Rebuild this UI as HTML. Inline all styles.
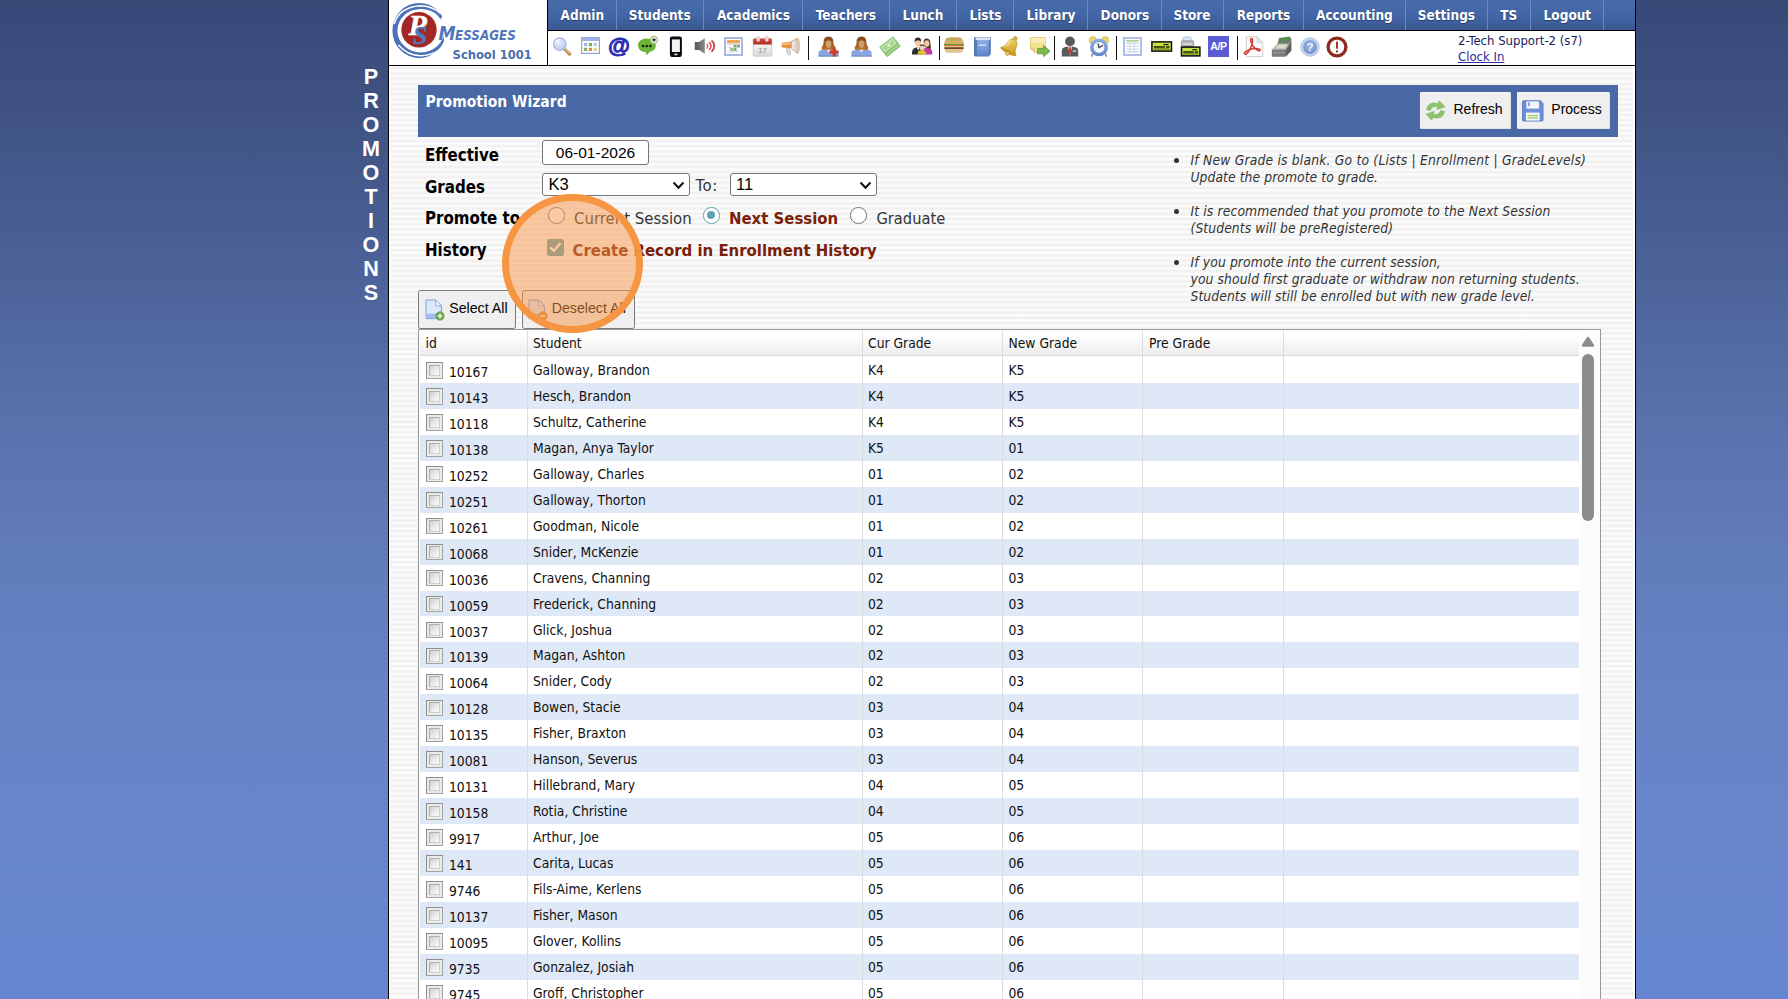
<!DOCTYPE html>
<html lang="en"><head><meta charset="utf-8"><title>Promotion Wizard</title>
<style>
html,body{margin:0;padding:0}
body{width:1788px;height:999px;overflow:hidden;position:relative;
 background:linear-gradient(to bottom,#374977 0px,#3e5181 100px,#4a6096 250px,#5770aa 400px,#617cba 550px,#6683c5 700px,#6786cb 850px,#6585d0 999px);
 font-family:"DejaVu Sans Condensed","DejaVu Sans","Liberation Sans",sans-serif;font-size:13.75px;color:#111}
.abs{position:absolute}
#main{position:absolute;left:388px;top:0;width:1246px;height:999px;border-left:1px solid #000;border-right:1px solid #000;
 background:#fff}
#stripes{position:absolute;left:390px;top:63.1px;width:1243px;height:940px;
 background:repeating-linear-gradient(to bottom,#f0f0f0 0px,#f3f3f3 .9px,#fdfdfd 2.4px,#fdfdfd 2.8px,#f3f3f3 4.3px,#f0f0f0 5.2px)}
#hdrwhite{position:absolute;left:389px;top:0;width:1246px;height:65px;background:#fff}
#hline{position:absolute;left:389px;top:65px;width:1246px;height:1px;background:#000}
#vline{position:absolute;left:547px;top:0;width:1px;height:65px;background:#000}
#nav{position:absolute;left:548px;top:0;width:1087px;height:30px;background:linear-gradient(to bottom,#4a6ba8 0,#4367a8 45%,#3f5f9d 75%,#3a5791 100%)}
#navline{position:absolute;left:548px;top:30px;width:1087px;height:1px;background:#000}
.ni{position:absolute;top:0;height:30px;border-right:1px solid #6c89c2;box-sizing:border-box;color:#fff;font-weight:bold;font-size:13.85px;line-height:30.4px;text-align:center;text-shadow:0 1px 1px rgba(20,30,60,.55);white-space:nowrap}
.ni span{display:inline-block;transform:scaleX(.975);transform-origin:50% 50%}
.side{position:absolute;left:351px;width:40px;text-align:center;color:#fff;font:bold 21.6px/24px "Liberation Sans",sans-serif}
.sep{position:absolute;top:36px;width:1.4px;height:24px;background:#111}
.ico{position:absolute;overflow:visible}
#user{position:absolute;left:1458px;top:33px;font-size:13px;line-height:16px;color:#1c1c5c;white-space:nowrap}
#user a{color:#2a2a9c;text-decoration:underline}
#title{position:absolute;left:418px;top:85px;width:1200px;height:52px;background:#4869a6}
#title h1{position:absolute;left:7.5px;top:6.5px;margin:0;color:#fff;font-size:15.5px;line-height:20px;font-weight:bold;white-space:nowrap}
.btn{position:absolute;box-sizing:border-box;background:#efefef;border:1px solid #5d6f96;border-radius:2.5px;font:14px/20px "Liberation Sans",sans-serif;color:#000;white-space:nowrap}
.btn span{position:absolute}
.lbl{position:absolute;left:425px;font-weight:bold;font-size:16.75px;line-height:20px;color:#000;white-space:nowrap}
.t16{position:absolute;font-size:16.6px;line-height:20px;color:#333;white-space:nowrap}
.red{color:#7a2008;font-weight:bold}
.inp{position:absolute;box-sizing:border-box;background:#fff;border:1px solid #767676;border-radius:3px;font:16px/22px "Liberation Sans",sans-serif;color:#000}
.radio{position:absolute;box-sizing:border-box;width:16.5px;height:16.5px;border-radius:50%;border:1.5px solid #767676;background:#fff}
#notes{position:absolute;left:1190.5px;top:151.7px;font-style:italic;font-size:13.75px;line-height:17px;color:#333;white-space:nowrap}
#notes div{position:absolute;left:0;white-space:nowrap}
#notes i{position:absolute;left:-16.8px;width:5.4px;height:5.4px;border-radius:50%;background:#333}
#grid{position:absolute;left:418px;top:329px;width:1183px;height:680px;box-sizing:border-box;border:1px solid #999;background:#fff}
#ghead{position:absolute;left:420px;top:330px;width:1159px;height:25px;background:linear-gradient(to bottom,#ffffff 0,#fbfbfb 40%,#ececec 100%);border-bottom:1px solid #d8d8d8}
.gh{position:absolute;top:330.7px;height:25px;line-height:25px;font-size:13.75px;color:#111;white-space:nowrap}
.vl{position:absolute;top:331px;width:1px;height:668px;background:#dcdcdc}
.row{position:absolute;left:420px;width:1159px;height:26px}
.row.alt{background:#dfe8f6}
.c{position:absolute;white-space:nowrap;font-size:13.75px;line-height:26px;height:26px;top:0}
.cb{position:absolute;left:6px;top:5.2px;width:16.8px;height:16.5px;box-sizing:border-box;border:1.4px solid;border-color:#8d8d8d #a3a3a3 #a3a3a3 #8d8d8d;background:#ebebeb}
.cb b{position:absolute;left:1.6px;top:1.6px;right:1.6px;bottom:1.6px;box-sizing:border-box;border:1px solid;border-color:#adadad #cfcfcf #cfcfcf #adadad;background:linear-gradient(135deg,#cdcdcd 0,#e6e6e6 45%,#fbfbfb 100%)}
#hl{position:absolute;left:502.4px;top:194px;width:140.2px;height:139px;box-sizing:border-box;border-radius:50%;border:7px solid rgba(247,148,62,.96);background:rgba(247,150,70,.5)}
</style></head>
<body>
<div id="main"></div><div id="stripes"></div><div id="hdrwhite"></div>
<div class="side" style="top:64.6px">P</div><div class="side" style="top:88.6px">R</div><div class="side" style="top:112.6px">O</div><div class="side" style="top:136.6px">M</div><div class="side" style="top:160.6px">O</div><div class="side" style="top:184.6px">T</div><div class="side" style="top:208.6px">I</div><div class="side" style="top:232.6px">O</div><div class="side" style="top:256.6px">N</div><div class="side" style="top:280.6px">S</div>
<svg class="ico" style="left:389px;top:0" width="158" height="65" viewBox="0 0 158 65"><path fill-rule="evenodd" fill="#4b72b7" d="M3.4 30.6 A26.8 27.6 0 1 0 57 30.6 A26.8 27.6 0 1 0 3.4 30.6 Z M8.4 30.7 A23.4 21.8 0 1 0 55.2 30.7 A23.4 21.8 0 1 0 8.4 30.7 Z"/><path d="M52 18 L60 12 L62 50 L55.5 44.5 Z" fill="#fff"/><path d="M5.2 24 Q10 7.4 31 5.8 Q43 5.8 51.5 13.5" fill="none" stroke="#fff" stroke-width="1.5"/><path d="M9.5 45 Q20 57.4 36 55.4 Q47 53.8 55.5 46" fill="none" stroke="#fff" stroke-width="1.4"/><circle cx="30" cy="29.8" r="17.7" fill="#a32724"/><text x="19.6" y="35.4" font-family="Liberation Serif,serif" font-size="30" font-style="italic" font-weight="bold" fill="#fff" stroke="#fff" stroke-width=".5">P</text><text x="24" y="43.8" font-family="Liberation Serif,serif" font-size="26" font-style="italic" font-weight="bold" fill="#4f78c0" stroke="#4f78c0" stroke-width=".4">S</text><text x="49.6" y="39.8" font-family="DejaVu Sans Condensed,DejaVu Sans,sans-serif" font-style="italic" font-weight="bold" fill="#5075ba"><tspan font-size="19">M</tspan><tspan font-size="13.3" dx="-.6">ESSAGES</tspan></text><text x="63.6" y="58.6" font-family="DejaVu Sans Condensed,DejaVu Sans,sans-serif" font-size="12.8" font-weight="bold" fill="#4a6fae">School 1001</text></svg>
<div id="nav"></div><div id="navline"></div><div id="vline"></div><div id="hline"></div>
<div class="ni" style="left:548px;width:69px"><span>Admin</span></div><div class="ni" style="left:617px;width:87px"><span>Students</span></div><div class="ni" style="left:704px;width:99px"><span>Academics</span></div><div class="ni" style="left:803px;width:87px"><span>Teachers</span></div><div class="ni" style="left:890px;width:67px"><span>Lunch</span></div><div class="ni" style="left:957px;width:57px"><span>Lists</span></div><div class="ni" style="left:1014px;width:74px"><span>Library</span></div><div class="ni" style="left:1088px;width:74px"><span>Donors</span></div><div class="ni" style="left:1162px;width:62px"><span>Store</span></div><div class="ni" style="left:1224px;width:80px"><span>Reports</span></div><div class="ni" style="left:1304px;width:102px"><span>Accounting</span></div><div class="ni" style="left:1406px;width:82px"><span>Settings</span></div><div class="ni" style="left:1488px;width:43px"><span>TS</span></div><div class="ni" style="left:1531px;width:73px"><span>Logout</span></div>
<svg width="0" height="0" style="position:absolute"><defs>
<linearGradient id="gBlue" x1="0" y1="0" x2="0" y2="1"><stop offset="0" stop-color="#8fb0e6"/><stop offset="1" stop-color="#5f86cc"/></linearGradient>
<linearGradient id="gGray" x1="0" y1="0" x2="1" y2="0"><stop offset="0" stop-color="#555"/><stop offset="1" stop-color="#8a8a8a"/></linearGradient>
<linearGradient id="gGold" x1="0" y1="0" x2="1" y2="1"><stop offset="0" stop-color="#f2dc7a"/><stop offset="1" stop-color="#c79a1e"/></linearGradient>
<linearGradient id="gRed" x1="0" y1="0" x2="0" y2="1"><stop offset="0" stop-color="#d9473a"/><stop offset="1" stop-color="#b02a20"/></linearGradient>
<linearGradient id="gPage" x1="0" y1="0" x2="0" y2="1"><stop offset="0" stop-color="#ffffff"/><stop offset="1" stop-color="#d8d8d8"/></linearGradient>
<radialGradient id="gLens" cx=".4" cy=".35" r=".7"><stop offset="0" stop-color="#e6eefc"/><stop offset="1" stop-color="#b7c9ee"/></radialGradient>
<radialGradient id="gHelp" cx=".5" cy=".35" r=".7"><stop offset="0" stop-color="#9db7e4"/><stop offset="1" stop-color="#6f90cc"/></radialGradient>
<linearGradient id="gHair" x1="0" y1="0" x2="0" y2="1"><stop offset="0" stop-color="#8a4a1c"/><stop offset="1" stop-color="#b9722f"/></linearGradient>
<linearGradient id="gCone" x1="0" y1="0" x2="1" y2="0"><stop offset="0" stop-color="#f4f4f4"/><stop offset="1" stop-color="#b9b9b9"/></linearGradient>
</defs></svg>
<svg class="ico" style="left:551px;top:35px" width="22" height="22" viewBox="0 0 22 22"><path d="M13.2 13.6 L18.6 19" stroke="#b58f52" stroke-width="3.4" stroke-linecap="round"/><path d="M13.6 13.2 L18.2 17.8" stroke="#e0c792" stroke-width="1.2" stroke-linecap="round"/><circle cx="8.8" cy="9.1" r="6.3" fill="url(#gLens)" stroke="#a9b9dc" stroke-width="1.3"/><path d="M4.8 8 A4.4 4.4 0 0 1 9 4.6" stroke="#fff" stroke-width="1.2" fill="none" opacity=".8"/></svg>
<svg class="ico" style="left:581px;top:37px" width="19" height="17" viewBox="0 0 19 17"><rect x=".6" y=".6" width="17.8" height="15.8" fill="#fdfdff" stroke="#8fa5d6" stroke-width="1.2"/><rect x="1" y="1" width="17" height="3" fill="#9fb4e4"/><rect x="3" y="6" width="3.2" height="3.2" fill="#9fb7e6"/><rect x="7.8" y="6" width="3.2" height="3.2" fill="#7fae55"/><rect x="12.6" y="6" width="3.2" height="3.2" fill="#b9c6e6"/><rect x="3" y="10.8" width="3.2" height="3.2" fill="#86b35a"/><rect x="7.8" y="10.8" width="3.2" height="3.2" fill="#e58a4e"/><rect x="12.6" y="10.8" width="3.2" height="3.2" fill="#ecd26a"/></svg>
<div class="abs" style="left:606px;top:29.6px;width:26px;height:32px;font:bold 22.5px/32px 'Liberation Sans',sans-serif;color:#2b2bb3;-webkit-text-stroke:.9px #2b2bb3;text-align:center">@</div>
<svg class="ico" style="left:637px;top:35px" width="22" height="22" viewBox="0 0 22 22"><path d="M9.6 3.6 C4.4 3.6 1 6.6 1 10.4 C1 14 4.2 16.8 8.8 17.2 L9.6 20.6 L12.8 16.8 C16.6 16 18.8 13.4 18.8 10.4 C18.8 6.6 15 3.6 9.6 3.6 Z" fill="#6cb33a"/><circle cx="6" cy="11" r="1.25" fill="#0b1a05"/><circle cx="9.7" cy="11" r="1.25" fill="#0b1a05"/><circle cx="13.4" cy="11" r="1.25" fill="#0b1a05"/><circle cx="17" cy="4.9" r="3.6" fill="#f4f8ee" stroke="#7dba4e" stroke-width="1"/><path d="M17 3 V6.8 M15.1 4.9 H18.9" stroke="#222" stroke-width="1.1"/></svg>
<svg class="ico" style="left:669px;top:36px" width="14" height="22" viewBox="0 0 14 22"><rect x=".9" y=".4" width="12" height="20.6" rx="2.2" fill="#0c0c0c"/><rect x="2.9" y="3.4" width="8" height="12.6" fill="#f2f2f2"/><rect x="5.2" y="17.4" width="3.4" height="1.8" rx=".8" fill="#d8d8d8"/></svg>
<svg class="ico" style="left:694px;top:37px" width="23" height="18" viewBox="0 0 23 18"><path d="M.8 5 H5 L10.8 1.2 V16.8 L5 13 H.8 Z" fill="url(#gGray)"/><path d="M13 7.2 A2.6 2.6 0 0 1 13 11" fill="none" stroke="#d86a72" stroke-width="1.4" stroke-linecap="round"/><path d="M15.4 5.6 A4.6 4.6 0 0 1 15.4 12.6" fill="none" stroke="#d45560" stroke-width="1.6" stroke-linecap="round"/><path d="M18 4 A6.8 6.8 0 0 1 18 14.2" fill="none" stroke="#cc4450" stroke-width="1.8" stroke-linecap="round"/></svg>
<svg class="ico" style="left:724px;top:37px" width="19" height="19" viewBox="0 0 19 19"><rect x="1" y="1" width="17" height="17" fill="#fff" stroke="#a9b8e2" stroke-width="2"/><rect x="3" y="3" width="13" height="3.4" fill="#f0a45a"/><rect x="9.6" y="7.6" width="3" height="3" fill="#78b060"/><rect x="12.8" y="7.6" width="3" height="3" fill="#78b060"/><rect x="6.3" y="11" width="3" height="3" fill="#8fbf6c"/><rect x="9.6" y="11" width="3" height="3" fill="#78b060"/><path d="M3 7.3 H16 M3 10.7 H16 M3 14.2 H16 M6 6.5 V16 M9.3 6.5 V16 M12.6 6.5 V16" stroke="#c5cfe8" stroke-width=".7"/></svg>
<svg class="ico" style="left:752px;top:36px" width="21" height="21" viewBox="0 0 21 21"><rect x="1.2" y="3" width="18.6" height="17.2" rx="1" fill="url(#gPage)" stroke="#c6c6c6" stroke-width=".8"/><path d="M1.2 3.8 Q1.2 2.6 2.4 2.6 H18.6 Q19.8 2.6 19.8 3.8 V8.4 H1.2 Z" fill="url(#gRed)"/><rect x="4.6" y=".4" width="3.2" height="5" rx="1.2" fill="#f1dede" stroke="#c9a9a6" stroke-width=".5"/><rect x="13.2" y=".4" width="3.2" height="5" rx="1.2" fill="#f1dede" stroke="#c9a9a6" stroke-width=".5"/><text x="10.6" y="17.4" text-anchor="middle" font-family="Liberation Sans,sans-serif" font-size="7.6" font-weight="bold" fill="#a8a8a8">17</text></svg>
<svg class="ico" style="left:780px;top:37px" width="22" height="21" viewBox="0 0 22 21"><path d="M6.2 10.4 L9.4 10.6 L10.6 16.2 Q10.8 17.6 9.6 17.8 L8.6 18 Q7.6 18 7.4 16.8 Z" fill="#d9d9d9" stroke="#a9a9a9" stroke-width=".6"/><path d="M2 5.8 Q1 8 2 10.6 L11.8 11.2 V4.6 Z" fill="#e8923c"/><path d="M2.4 6.6 L11.6 5.6 V7.4 L2.2 8 Z" fill="#f6c58e"/><path d="M11.4 4.4 L17.6 1 Q21 7.8 17.8 16.6 L11.4 11.6 Z" fill="url(#gCone)" stroke="#c98e5a" stroke-width=".7"/><ellipse cx="18.4" cy="8.8" rx="1.6" ry="7.8" fill="#e9c9a5" opacity=".8"/></svg>
<svg class="ico" style="left:818px;top:36px" width="21" height="21" viewBox="0 0 21 21"><path d="M.4 20.6 V17 Q.4 14.4 4 14 L8 13.2 H13 L17 14 Q20.6 14.4 20.6 17 V20.6 Z" fill="#89a5de"/><rect x=".4" y="19.4" width="20.2" height="1.2" fill="#7693d0"/><path d="M8 13 L10.5 16.4 L13 13 Z" fill="#f3f3f8"/><path d="M10.5 .6 C6.6 .6 5.4 3.6 5.6 6.6 C5.8 9.4 3.4 10.4 3.6 12.4 C3.8 14 6 14.4 7.6 13.8 L13.4 13.8 C15 14.4 17.2 14 17.4 12.4 C17.6 10.4 15.2 9.4 15.4 6.6 C15.6 3.6 14.4 .6 10.5 .6 Z" fill="url(#gHair)"/><path d="M7.6 6.4 Q7.6 3.8 10.5 4.4 Q13.4 3.8 13.4 6.4 Q13.4 11 10.5 12.6 Q7.6 11 7.6 6.4 Z" fill="#cfa06c"/><path d="M7.2 5.6 Q9.4 5.4 10.6 3.2 Q11.8 5.2 13.8 5.6 Q13.6 2 10.5 2 Q7.4 2 7.2 5.6 Z" fill="#8a4a1c"/><path d="M16.2 11.6 V20.4 M11.8 16 H20.6" stroke="#d23c24" stroke-width="3.2"/></svg>
<svg class="ico" style="left:851px;top:36px" width="21" height="21" viewBox="0 0 21 21"><path d="M.4 20.6 V17 Q.4 14.4 4 14 L8 13.2 H13 L17 14 Q20.6 14.4 20.6 17 V20.6 Z" fill="#89a5de"/><rect x=".4" y="19.4" width="20.2" height="1.2" fill="#7693d0"/><path d="M8 13 L10.5 16.4 L13 13 Z" fill="#f3f3f8"/><path d="M10.5 .6 C6.6 .6 5.4 3.6 5.6 6.6 C5.8 9.4 3.4 10.4 3.6 12.4 C3.8 14 6 14.4 7.6 13.8 L13.4 13.8 C15 14.4 17.2 14 17.4 12.4 C17.6 10.4 15.2 9.4 15.4 6.6 C15.6 3.6 14.4 .6 10.5 .6 Z" fill="url(#gHair)"/><path d="M7.6 6.4 Q7.6 3.8 10.5 4.4 Q13.4 3.8 13.4 6.4 Q13.4 11 10.5 12.6 Q7.6 11 7.6 6.4 Z" fill="#cfa06c"/><path d="M7.2 5.6 Q9.4 5.4 10.6 3.2 Q11.8 5.2 13.8 5.6 Q13.6 2 10.5 2 Q7.4 2 7.2 5.6 Z" fill="#8a4a1c"/></svg>
<svg class="ico" style="left:879px;top:35px" width="22" height="23" viewBox="0 0 22 23"><g transform="translate(11 11.7) scale(.86) rotate(-38) translate(-11.1 -11.7)"><rect x="1.4" y="9" width="19.4" height="9.6" fill="#9fcf86" stroke="#79b361" stroke-width=".9"/><rect x="1.4" y="4.8" width="19.4" height="9.6" fill="#a9d890" stroke="#79b361" stroke-width=".9"/><rect x="3.2" y="6.4" width="15.8" height="6.4" fill="none" stroke="#d2ebc4" stroke-width=".9"/><circle cx="11.1" cy="9.6" r="2.5" fill="#d9efcd" stroke="#8cc274" stroke-width=".6"/></g></svg>
<svg class="ico" style="left:911px;top:36px" width="22" height="20" viewBox="0 0 22 20"><path d="M1 18.6 Q.6 12.6 5 11.6 L9.4 11.4 Q12 12.4 11.6 18.6 Z" fill="#2c2c30"/><path d="M5.6 11.4 L7.2 14.6 L8.8 11.4 Z" fill="#e8eef8"/><path d="M11.6 18.6 Q11.2 12.8 14.6 11.8 L18 11.8 Q21.6 12.8 21.2 18.6 Z" fill="#c038a8"/><path d="M12.6 6.6 Q12.4 2.6 15.8 2.6 Q19.6 2.8 19.4 7.6 Q19.6 10.6 20 12.4 L17.6 12.4 L13.8 11 Q12.8 9 12.6 6.6 Z" fill="#4a3428"/><ellipse cx="15.8" cy="7.6" rx="2.6" ry="3.3" fill="#f0c9a2"/><ellipse cx="6.8" cy="6.6" rx="3" ry="3.7" fill="#f0c9a2"/><path d="M3.6 6.4 Q3.2 1.6 7 1.6 Q10.6 1.8 10 6 Q8.4 3.6 6 4.4 Q4.4 4.6 3.6 6.4 Z" fill="#3a2a22"/><path d="M6.6 18.6 Q6.4 14.8 9 14.2 L12.8 14.2 Q15.2 14.8 15 18.6 Z" fill="#d8c42a"/><ellipse cx="10.9" cy="11.4" rx="2.3" ry="2.6" fill="#f2cfa8"/><path d="M8.6 10.8 Q8.6 8.2 10.9 8.2 Q13.2 8.2 13.2 10.8 Q11.8 9.4 10.9 9.8 Q9.8 9.6 8.6 10.8 Z" fill="#5a3a24"/></svg>
<svg class="ico" style="left:943px;top:36px" width="22" height="18" viewBox="0 0 22 18"><path d="M1.4 8 Q1.2 1.4 6.4 1.2 H15.4 Q20.6 1.4 20.6 8 Z" fill="#d9b26a"/><path d="M3 3.4 Q5 1.8 11 1.8 Q17 1.8 19 3.4 Q17 5 11 5.2 Q5 5 3 3.4 Z" fill="#b8a458" opacity=".7"/><rect x="1" y="7.8" width="20" height="1.6" fill="#6f9a3a"/><rect x="1.2" y="9.2" width="19.6" height="1.3" fill="#d8503a"/><rect x="1" y="10.3" width="20" height="1.1" fill="#f0d25a"/><rect x="1.4" y="11.2" width="19.2" height="2" fill="#6a4a2a"/><path d="M1.6 13 H20.4 Q20.4 16.6 17 16.8 H5 Q1.6 16.6 1.6 13 Z" fill="#e2c58c"/></svg>
<svg class="ico" style="left:972.5px;top:36px" width="19" height="21.5" viewBox="0 0 19 21.5"><path d="M2.4 1 H16.8 Q17.8 1 17.8 2 V18 L15.8 20.4 H2.4 Q1 20.4 1 19 V2.4 Q1 1 2.4 1 Z" fill="#5577b8"/><path d="M2.6 1.4 H17 V4 H2.6 Z" fill="#dfe7f6"/><rect x="2.2" y="4" width="13.6" height="15.6" fill="url(#gBlue)"/><rect x="2.2" y="4" width="1.6" height="15.6" fill="#4f72b4"/><rect x="5.8" y="8.4" width="7" height="1.5" fill="#dbe5f7"/></svg>
<svg class="ico" style="left:1000px;top:35px" width="22" height="23" viewBox="0 0 22 23"><g transform="rotate(28 11 11.5)"><circle cx="11" cy="2.4" r="1.9" fill="#d9b43a" stroke="#b18f24" stroke-width=".6"/><path d="M11 3.6 C6.4 3.6 6.2 9 5.6 12.6 C5.2 15 3 15.8 2.4 17.4 H19.6 C19 15.8 16.8 15 16.4 12.6 C15.8 9 15.6 3.6 11 3.6 Z" fill="url(#gGold)" stroke="#b89322" stroke-width=".7"/><ellipse cx="11" cy="17.6" rx="8.6" ry="1.7" fill="#c79a1e"/><circle cx="11" cy="19.4" r="1.9" fill="#e9cf62" stroke="#a8841c" stroke-width=".6"/><path d="M8 6.6 Q7.2 9.6 7 12.6" stroke="#fbf0b8" stroke-width="1.3" fill="none" opacity=".8"/></g></svg>
<svg class="ico" style="left:1030px;top:37px" width="21" height="20" viewBox="0 0 21 20"><path d="M.6 .6 H15.4 V15.4 H4.4 L.6 11.6 Z" fill="#f3e38c" stroke="#d8c56a" stroke-width=".8"/><rect x="1" y="1" width="14" height="4.6" fill="#f8efc0"/><path d="M.8 11.4 H4.6 V15.2 Z" fill="#e8d9a0" stroke="#cdb860" stroke-width=".5"/><path d="M7.6 11.4 H13.6 V8.6 L20 14.2 L13.6 19.6 V16.8 H7.6 Z" fill="#7fb84e" stroke="#5f9a32" stroke-width=".9" stroke-linejoin="round"/></svg>
<svg class="ico" style="left:1061px;top:36px" width="18" height="21" viewBox="0 0 18 21"><circle cx="9" cy="5.4" r="4.9" fill="#595959"/><path d="M.8 20.6 V15 Q.8 11.6 4.6 11 L7 10.4 H11 L13.4 11 Q17.2 11.6 17.2 15 V20.6 Z" fill="#5a5a5a"/><path d="M7 10.6 L9 19.6 L11 10.6 Z" fill="#f4f4f4"/><path d="M8.2 11 H9.8 L10.3 16.4 L9 18.6 L7.7 16.4 Z" fill="#d63a2c"/><rect x="11.8" y="14.4" width="3.4" height="1.5" fill="#cfcfcf"/></svg>
<svg class="ico" style="left:1088px;top:35.5px" width="22" height="22" viewBox="0 0 22 22"><path d="M4.6 18 L3.6 20 M17.4 18 L18.4 20" stroke="#9a9a9a" stroke-width="1.8" stroke-linecap="round"/><circle cx="4.8" cy="4.2" r="3.6" fill="#ecd46a" stroke="#cfae3c" stroke-width=".6"/><circle cx="17.2" cy="4.2" r="3.6" fill="#ecd46a" stroke="#cfae3c" stroke-width=".6"/><circle cx="11" cy="11.4" r="8.9" fill="url(#gBlue)"/><circle cx="11" cy="11.4" r="5.9" fill="#f7f9fd" stroke="#5d80c2" stroke-width=".7"/><path d="M11 11.6 L10.2 8 M11 11.6 L14.4 9.6" stroke="#555" stroke-width="1.5" stroke-linecap="round"/></svg>
<svg class="ico" style="left:1123px;top:37px" width="19" height="19" viewBox="0 0 19 19"><rect x="1" y="1" width="17" height="17" fill="#fff" stroke="#b0bde6" stroke-width="2"/><rect x="3.2" y="3.2" width="12.6" height="1.4" fill="#9fc77a"/><rect x="3.2" y="5.6" width="12.6" height="1.3" fill="#ccd5ee"/><path d="M3.2 9.2 H15.8 M3.2 12 H15.8 M3.2 14.8 H15.8" stroke="#c8d2ec" stroke-width="1"/><path d="M6.6 6.6 V16 M11 6.6 V16" stroke="#c8d2ec" stroke-width=".9"/></svg>
<svg class="ico" style="left:1150.6px;top:41px" width="21.4" height="11" viewBox="0 0 21.4 11"><rect x="0.9" y="0.9" width="19.599999999999998" height="9.2" fill="#c5e33c" stroke="#0d0d0d" stroke-width="1.5"/><rect x="12.411999999999999" y="2.97" width="5.135999999999999" height="1.2" fill="#1a1a1a"/><rect x="2.782" y="5.17" width="11.128" height="1.6" fill="#23300a"/><rect x="14.979999999999999" y="5.17" width="3.638" height="1.6" fill="#23300a"/><rect x="2.782" y="7.48" width="15.835999999999999" height="1" fill="#4a5a14"/></svg>
<svg class="ico" style="left:1179.5px;top:36px" width="21" height="21" viewBox="0 0 21 21"><path d="M4 1 H10.4 L12 3.6 V6 H3 V2 Z" fill="#dfe8f8" stroke="#9fb0d0" stroke-width=".7"/><path d="M1.4 6 Q1.4 4.8 2.6 4.8 H12.4 Q13.6 4.8 13.6 6 V12 H1.4 Z" fill="#b8b8b8" stroke="#8e8e8e" stroke-width=".7"/><rect x="3" y="7.6" width="9" height="1.2" fill="#ececec"/><rect x="3" y="9.6" width="9" height="1" fill="#8a8a8a"/><rect x="1.5" y="11.1" width="18.4" height="8.799999999999999" fill="#c5e33c" stroke="#0d0d0d" stroke-width="1.5"/><rect x="12.315999999999999" y="13.062" width="4.848" height="1.2" fill="#1a1a1a"/><rect x="3.226" y="15.181999999999999" width="10.504" height="1.6" fill="#23300a"/><rect x="14.739999999999998" y="15.181999999999999" width="3.434" height="1.6" fill="#23300a"/><rect x="3.226" y="17.408" width="14.947999999999999" height="1" fill="#4a5a14"/></svg>
<div class="abs" style="left:1208px;top:36px;width:21px;height:21px;background:#5a5ad2;color:#fff;font:bold 10.6px/21px 'Liberation Sans',sans-serif;text-align:center;letter-spacing:-.4px">A/P</div>
<svg class="ico" style="left:1243px;top:35.5px" width="21" height="22" viewBox="0 0 21 22"><path d="M3.4 .8 H14 L19.8 6.6 V20.6 H3.4 Z" fill="#fbfbfb" stroke="#c9c9c9" stroke-width=".9"/><path d="M14 .8 V6.6 H19.8 Z" fill="#e6e6e6" stroke="#c9c9c9" stroke-width=".7"/><path d="M8.4 2.6 C10.4 2.4 9.6 7.6 7.4 12.4 C5.8 16 3 19 1.6 18 C0 16.6 5.6 13 11.4 12.6 C15.4 12.2 17.8 13.2 17.2 14.4 C16.4 15.8 12.4 13.6 10 10 C7.6 6.4 7 2.8 8.4 2.6 Z" fill="none" stroke="#d63a32" stroke-width="1.5" stroke-linejoin="round"/></svg>
<svg class="ico" style="left:1270.5px;top:35.5px" width="22" height="22" viewBox="0 0 22 22"><path d="M8 2 L19 .6 L20.4 3.4 L18 8.6 L6.4 8.6 Z" fill="#6d7a6a"/><path d="M9.6 3 L18.4 1.8 L19 3.6 L10.2 5 Z" fill="#4f9a3a"/><path d="M.8 13.6 L6.8 7.4 H18.6 L15 13.6 Z" fill="#a9ad9f"/><path d="M3.6 12.4 L7.6 8.6 H16.6 L14.2 12.4 Z" fill="#d9dcc9"/><path d="M.8 13.6 H15 V20 Q15 20.8 14.2 20.8 H1.6 Q.8 20.8 .8 20 Z" fill="#7b7b7b"/><path d="M15 13.6 L18.6 7.4 L20.4 3.6 V14.8 L15 20.6 Z" fill="#5e5e5e"/><rect x="2.4" y="16" width="11" height="1.2" fill="#9a9a9a"/></svg>
<svg class="ico" style="left:1300.2px;top:36.9px" width="20" height="20" viewBox="0 0 20 20"><circle cx="10" cy="10" r="9.2" fill="#c8d6ef" stroke="#a8bbe0" stroke-width=".9"/><circle cx="10" cy="10" r="6.9" fill="url(#gHelp)"/><text x="10" y="14.2" text-anchor="middle" font-family="Liberation Sans,sans-serif" font-size="11.5" font-weight="bold" fill="#f4f7fd">?</text></svg>
<svg class="ico" style="left:1326.3px;top:35.6px" width="22" height="22" viewBox="0 0 22 22"><circle cx="11" cy="11" r="8.9" fill="#fff" stroke="#8d2a1c" stroke-width="3.3"/><rect x="10" y="5.4" width="2" height="7.4" rx=".6" fill="#a8321f"/><rect x="10" y="14.2" width="2" height="2.2" rx=".5" fill="#a8321f"/></svg>
<div class="sep" style="left:807.7px"></div><div class="sep" style="left:938.7px"></div><div class="sep" style="left:1053.7px"></div><div class="sep" style="left:1115.6px"></div><div class="sep" style="left:1236.7px"></div>
<div id="user">2-Tech Support-2 (s7)<br><a>Clock In</a></div>
<div id="title"><h1>Promotion Wizard</h1></div>
<div class="btn" style="left:1419.5px;top:91.8px;width:91.4px;height:37.5px;border-color:#f6f6f6 #e2e2e2 #e2e2e2 #f6f6f6;border-radius:1.5px"><span style="left:33px;top:6.2px">Refresh</span></div><div class="btn" style="left:1516.8px;top:91.8px;width:93.6px;height:37.5px;border-color:#f6f6f6 #e2e2e2 #e2e2e2 #f6f6f6;border-radius:1.5px"><span style="left:33.5px;top:6.2px">Process</span></div>
<div class="lbl" style="top:144.7px">Effective</div><div class="lbl" style="top:176.7px">Grades</div><div class="lbl" style="top:207.7px">Promote to</div><div class="lbl" style="top:239.7px">History</div>
<div class="inp" style="left:542px;top:140px;width:107px;height:25px;text-align:center;font-size:15.5px;line-height:23.6px">06-01-2026</div>
<div class="inp" style="left:542px;top:173px;width:147.5px;height:22.5px;line-height:21.2px;font-size:16.5px;padding-left:5.5px">K3<svg class="abs" style="right:3.6px;top:6.6px" width="13" height="9" viewBox="0 0 13 9"><path d="M1.5 1.5 L6.5 6.8 L11.5 1.5" fill="none" stroke="#111" stroke-width="2.1"/></svg></div><div class="t16" style="left:695.5px;top:176.2px;letter-spacing:.7px">To:</div><div class="inp" style="left:729.5px;top:173px;width:147.5px;height:22.5px;line-height:21.2px;font-size:16.5px;padding-left:5.5px">11<svg class="abs" style="right:3.6px;top:6.6px" width="13" height="9" viewBox="0 0 13 9"><path d="M1.5 1.5 L6.5 6.8 L11.5 1.5" fill="none" stroke="#111" stroke-width="2.1"/></svg></div>
<div class="radio" style="left:548px;top:207.2px"></div><div class="t16" style="left:574px;top:208.6px">Current Session</div><div class="radio" style="left:703.2px;top:207.2px;border-color:#5fa2b1;border-width:1.5px"><div class="abs" style="left:2.6px;top:2.6px;width:8.3px;height:8.3px;border-radius:50%;background:#5fa2b1"></div></div><div class="t16 red" style="left:729px;top:208.6px">Next Session</div><div class="radio" style="left:850px;top:207.2px"></div><div class="t16" style="left:876.5px;top:208.6px;font-size:16.3px">Graduate</div>
<div class="abs" style="left:547px;top:239.3px;width:16.9px;height:16.4px;border-radius:2.5px;background:#5fa2b1"><svg class="abs" style="left:0;top:0" width="16.9" height="16.4" viewBox="0 0 16 16"><path d="M3 8.2 L6.4 11.6 L13 4" fill="none" stroke="#fff" stroke-width="2.3"/></svg></div><div class="t16 red" style="left:572.5px;top:240.6px">Create Record in Enrollment History</div>
<div id="notes"><i style="top:6.2px"></i><div style="top:0px;letter-spacing:0.187px">If New Grade is blank. Go to (Lists | Enrollment | GradeLevels)</div><div style="top:17px;letter-spacing:0.067px">Update the promote to grade.</div><i style="top:57.2px"></i><div style="top:51px;letter-spacing:0.128px">It is recommended that you promote to the Next Session</div><div style="top:68px;letter-spacing:0.081px">(Students will be preRegistered)</div><i style="top:108.2px"></i><div style="top:102px;letter-spacing:0.117px">If you promote into the current session,</div><div style="top:119px;letter-spacing:0.094px">you should first graduate or withdraw non returning students.</div><div style="top:136px;letter-spacing:0.074px">Students will still be enrolled but with new grade level.</div></div>
<div class="btn" style="left:418px;top:290px;width:97.5px;height:38.5px;border-color:#7a7a7a"><span style="left:30.2px;top:7.3px;font-size:14.2px">Select All</span></div><div class="btn" style="left:522px;top:290px;width:113px;height:38.5px;border-color:#7a7a7a"><span style="left:28.7px;top:7.3px;font-size:14.2px">Deselect All</span></div>
<div id="grid"></div><div id="ghead"></div>
<div class="gh" style="left:425.5px">id</div><div class="gh" style="left:533px">Student</div><div class="gh" style="left:868px">Cur Grade</div><div class="gh" style="left:1008.5px">New Grade</div><div class="gh" style="left:1149px">Pre Grade</div>
<div class="row" style="top:357.00px;height:25.95px"><div class="cb"><b></b></div><div class="c" style="left:29px;top:2px">10167</div><div class="c" style="left:113px">Galloway, Brandon</div><div class="c" style="left:448px">K4</div><div class="c" style="left:588.5px">K5</div></div>
<div class="row alt" style="top:382.95px;height:25.95px"><div class="cb"><b></b></div><div class="c" style="left:29px;top:2px">10143</div><div class="c" style="left:113px">Hesch, Brandon</div><div class="c" style="left:448px">K4</div><div class="c" style="left:588.5px">K5</div></div>
<div class="row" style="top:408.90px;height:25.95px"><div class="cb"><b></b></div><div class="c" style="left:29px;top:2px">10118</div><div class="c" style="left:113px">Schultz, Catherine</div><div class="c" style="left:448px">K4</div><div class="c" style="left:588.5px">K5</div></div>
<div class="row alt" style="top:434.85px;height:25.95px"><div class="cb"><b></b></div><div class="c" style="left:29px;top:2px">10138</div><div class="c" style="left:113px">Magan, Anya Taylor</div><div class="c" style="left:448px">K5</div><div class="c" style="left:588.5px">01</div></div>
<div class="row" style="top:460.80px;height:25.95px"><div class="cb"><b></b></div><div class="c" style="left:29px;top:2px">10252</div><div class="c" style="left:113px">Galloway, Charles</div><div class="c" style="left:448px">01</div><div class="c" style="left:588.5px">02</div></div>
<div class="row alt" style="top:486.75px;height:25.95px"><div class="cb"><b></b></div><div class="c" style="left:29px;top:2px">10251</div><div class="c" style="left:113px">Galloway, Thorton</div><div class="c" style="left:448px">01</div><div class="c" style="left:588.5px">02</div></div>
<div class="row" style="top:512.70px;height:25.95px"><div class="cb"><b></b></div><div class="c" style="left:29px;top:2px">10261</div><div class="c" style="left:113px">Goodman, Nicole</div><div class="c" style="left:448px">01</div><div class="c" style="left:588.5px">02</div></div>
<div class="row alt" style="top:538.65px;height:25.95px"><div class="cb"><b></b></div><div class="c" style="left:29px;top:2px">10068</div><div class="c" style="left:113px">Snider, McKenzie</div><div class="c" style="left:448px">01</div><div class="c" style="left:588.5px">02</div></div>
<div class="row" style="top:564.60px;height:25.95px"><div class="cb"><b></b></div><div class="c" style="left:29px;top:2px">10036</div><div class="c" style="left:113px">Cravens, Channing</div><div class="c" style="left:448px">02</div><div class="c" style="left:588.5px">03</div></div>
<div class="row alt" style="top:590.55px;height:25.95px"><div class="cb"><b></b></div><div class="c" style="left:29px;top:2px">10059</div><div class="c" style="left:113px">Frederick, Channing</div><div class="c" style="left:448px">02</div><div class="c" style="left:588.5px">03</div></div>
<div class="row" style="top:616.50px;height:25.95px"><div class="cb"><b></b></div><div class="c" style="left:29px;top:2px">10037</div><div class="c" style="left:113px">Glick, Joshua</div><div class="c" style="left:448px">02</div><div class="c" style="left:588.5px">03</div></div>
<div class="row alt" style="top:642.45px;height:25.95px"><div class="cb"><b></b></div><div class="c" style="left:29px;top:2px">10139</div><div class="c" style="left:113px">Magan, Ashton</div><div class="c" style="left:448px">02</div><div class="c" style="left:588.5px">03</div></div>
<div class="row" style="top:668.40px;height:25.95px"><div class="cb"><b></b></div><div class="c" style="left:29px;top:2px">10064</div><div class="c" style="left:113px">Snider, Cody</div><div class="c" style="left:448px">02</div><div class="c" style="left:588.5px">03</div></div>
<div class="row alt" style="top:694.35px;height:25.95px"><div class="cb"><b></b></div><div class="c" style="left:29px;top:2px">10128</div><div class="c" style="left:113px">Bowen, Stacie</div><div class="c" style="left:448px">03</div><div class="c" style="left:588.5px">04</div></div>
<div class="row" style="top:720.30px;height:25.95px"><div class="cb"><b></b></div><div class="c" style="left:29px;top:2px">10135</div><div class="c" style="left:113px">Fisher, Braxton</div><div class="c" style="left:448px">03</div><div class="c" style="left:588.5px">04</div></div>
<div class="row alt" style="top:746.25px;height:25.95px"><div class="cb"><b></b></div><div class="c" style="left:29px;top:2px">10081</div><div class="c" style="left:113px">Hanson, Severus</div><div class="c" style="left:448px">03</div><div class="c" style="left:588.5px">04</div></div>
<div class="row" style="top:772.20px;height:25.95px"><div class="cb"><b></b></div><div class="c" style="left:29px;top:2px">10131</div><div class="c" style="left:113px">Hillebrand, Mary</div><div class="c" style="left:448px">04</div><div class="c" style="left:588.5px">05</div></div>
<div class="row alt" style="top:798.15px;height:25.95px"><div class="cb"><b></b></div><div class="c" style="left:29px;top:2px">10158</div><div class="c" style="left:113px">Rotia, Christine</div><div class="c" style="left:448px">04</div><div class="c" style="left:588.5px">05</div></div>
<div class="row" style="top:824.10px;height:25.95px"><div class="cb"><b></b></div><div class="c" style="left:29px;top:2px">9917</div><div class="c" style="left:113px">Arthur, Joe</div><div class="c" style="left:448px">05</div><div class="c" style="left:588.5px">06</div></div>
<div class="row alt" style="top:850.05px;height:25.95px"><div class="cb"><b></b></div><div class="c" style="left:29px;top:2px">141</div><div class="c" style="left:113px">Carita, Lucas</div><div class="c" style="left:448px">05</div><div class="c" style="left:588.5px">06</div></div>
<div class="row" style="top:876.00px;height:25.95px"><div class="cb"><b></b></div><div class="c" style="left:29px;top:2px">9746</div><div class="c" style="left:113px">Fils-Aime, Kerlens</div><div class="c" style="left:448px">05</div><div class="c" style="left:588.5px">06</div></div>
<div class="row alt" style="top:901.95px;height:25.95px"><div class="cb"><b></b></div><div class="c" style="left:29px;top:2px">10137</div><div class="c" style="left:113px">Fisher, Mason</div><div class="c" style="left:448px">05</div><div class="c" style="left:588.5px">06</div></div>
<div class="row" style="top:927.90px;height:25.95px"><div class="cb"><b></b></div><div class="c" style="left:29px;top:2px">10095</div><div class="c" style="left:113px">Glover, Kollins</div><div class="c" style="left:448px">05</div><div class="c" style="left:588.5px">06</div></div>
<div class="row alt" style="top:953.85px;height:25.95px"><div class="cb"><b></b></div><div class="c" style="left:29px;top:2px">9735</div><div class="c" style="left:113px">Gonzalez, Josiah</div><div class="c" style="left:448px">05</div><div class="c" style="left:588.5px">06</div></div>
<div class="row" style="top:979.80px;height:25.95px"><div class="cb"><b></b></div><div class="c" style="left:29px;top:2px">9745</div><div class="c" style="left:113px">Groff, Christopher</div><div class="c" style="left:448px">05</div><div class="c" style="left:588.5px">06</div></div>
<div class="vl" style="left:527px"></div><div class="vl" style="left:862px"></div><div class="vl" style="left:1002px"></div><div class="vl" style="left:1142px"></div><div class="vl" style="left:1283px"></div>
<div class="abs" style="left:1580px;top:330px;width:20px;height:669px;background:#fcfcfc"></div><svg class="abs" style="left:1581px;top:336px" width="14" height="12" viewBox="0 0 14 12"><path d="M7 2 L12 9.5 L2 9.5 Z" fill="#8c8c8c" stroke="#8c8c8c" stroke-width="2.4" stroke-linejoin="round"/></svg><div class="abs" style="left:1582px;top:353.5px;width:12px;height:167.5px;border-radius:6px;background:#8c8c8c"></div>
<svg class="ico" style="left:1424.5px;top:100px" width="21" height="21" viewBox="0 0 21 21"><path d="M1.6 9.6 C2 5 6 2.4 10.4 3 L13.2 3.8 L14.2 .8 L20 6.8 L11.8 9.6 L12.6 6.8 C9 5.8 6.2 7.4 5.4 10.4 Z" fill="#8cc46c" stroke="#79b058" stroke-width=".6"/><path d="M19.4 11.4 C19 16 15 18.6 10.6 18 L7.8 17.2 L6.8 20.2 L1 14.2 L9.2 11.4 L8.4 14.2 C12 15.2 14.8 13.6 15.6 10.6 Z" fill="#8cc46c" stroke="#79b058" stroke-width=".6"/></svg>
<svg class="ico" style="left:1521.5px;top:99.5px" width="22" height="22" viewBox="0 0 22 22"><path d="M1.6 .8 H18.4 L21 3.4 V20 Q21 21 20 21 H1.6 Q.6 21 .6 20 V1.8 Q.6 .8 1.6 .8 Z" fill="#6f8fdc" stroke="#5672be" stroke-width=".9"/><rect x="4.4" y="1.4" width="12.6" height="7.2" fill="#f3f5fb"/><rect x="6.2" y="2.4" width="1.6" height="3.8" fill="#6f8fdc"/><rect x="4" y="12.6" width="13.6" height="8" fill="#f6f7fb"/><rect x="5.6" y="14.8" width="10.4" height="1.5" fill="#a7cf78"/><rect x="5.6" y="17.2" width="10.4" height="1.5" fill="#a7cf78"/></svg>
<svg class="ico" style="left:423.6px;top:298.6px" width="22" height="22" viewBox="0 0 22 22"><path d="M2 1 H11.6 L17.4 6.8 V19.6 H2 Z" fill="#dbe7fb" stroke="#7f9fd8" stroke-width="1"/><path d="M11.6 1 V6.8 H17.4 Z" fill="#f3f7fe" stroke="#7f9fd8" stroke-width=".8"/><rect x="2.6" y="14.6" width="14.2" height="4.4" fill="#9fbdf0"/><circle cx="16" cy="17" r="4.2" fill="#69a84c" stroke="#578f3e" stroke-width=".6"/><path d="M16 14.6 V19.4 M13.6 17 H18.4" stroke="#eef6e8" stroke-width="1.5"/></svg>
<svg class="ico" style="left:526.6px;top:298.6px" width="22" height="22" viewBox="0 0 22 22"><path d="M2 1 H11.6 L17.4 6.8 V19.6 H2 Z" fill="#dbe7fb" stroke="#7f9fd8" stroke-width="1"/><path d="M11.6 1 V6.8 H17.4 Z" fill="#f3f7fe" stroke="#7f9fd8" stroke-width=".8"/><rect x="2.6" y="14.6" width="14.2" height="4.4" fill="#9fbdf0"/><circle cx="16" cy="17" r="4.2" fill="#e8872a" stroke="#c96f1c" stroke-width=".6"/><path d="M13.6 17 H18.4" stroke="#fff" stroke-width="1.5"/></svg>
<div id="hl"></div>
</body></html>
